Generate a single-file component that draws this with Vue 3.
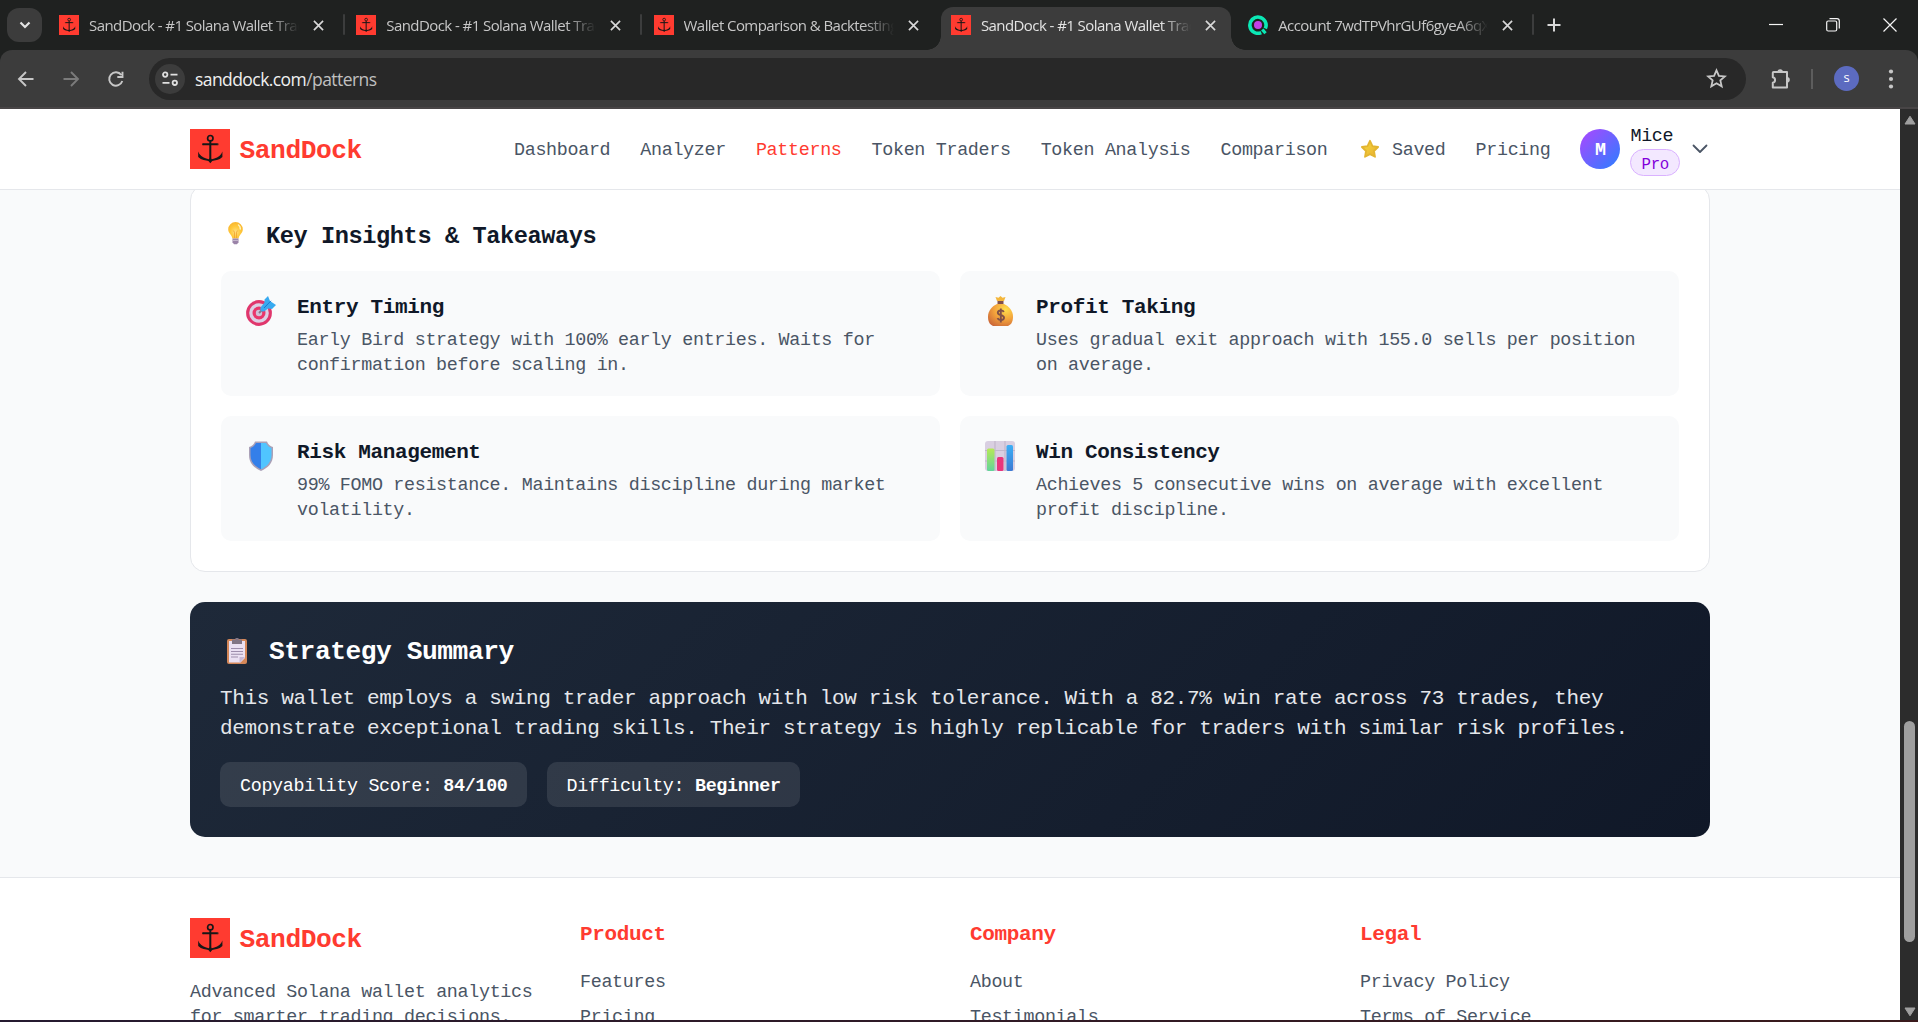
<script setup>
import { h } from 'vue'

const tabs = [
  { title: 'SandDock - #1 Solana Wallet Tracker', icon: 'anchor', sep: true },
  { title: 'SandDock - #1 Solana Wallet Tracker', icon: 'anchor', sep: true },
  { title: 'Wallet Comparison & Backtesting', icon: 'anchor' },
  { title: 'SandDock - #1 Solana Wallet Tracker', icon: 'anchor', active: true },
  { title: 'Account 7wdTPVhrGUf6gyeA6qX', icon: 'ring', sep: true },
]

const insights = [
  { icon: 'target', title: 'Entry Timing', text: 'Early Bird strategy with 100% early entries. Waits for confirmation before scaling in.' },
  { icon: 'bag', title: 'Profit Taking', text: 'Uses gradual exit approach with 155.0 sells per position on average.' },
  { icon: 'shield', title: 'Risk Management', text: '99% FOMO resistance. Maintains discipline during market volatility.' },
  { icon: 'chart', title: 'Win Consistency', text: 'Achieves 5 consecutive wins on average with excellent profit discipline.' },
]

const columns = [
  { title: 'Product', links: ['Features', 'Pricing'] },
  { title: 'Company', links: ['About', 'Testimonials'] },
  { title: 'Legal', links: ['Privacy Policy', 'Terms of Service'] },
]

const Anchor = () =>
  h('svg', { viewBox: '0 0 40 40' }, [
    h('rect', { width: 40, height: 40, fill: '#ff3b30' }),
    h('g', { fill: 'none', stroke: '#171717' }, [
      h('circle', { cx: 20.3, cy: 9.2, r: 2.7, 'stroke-width': 1.7 }),
      h('path', { d: 'M20.3 12V30M13 15.3H27.6', 'stroke-width': 2 }),
      h('path', { d: 'M12.7 14.4v1.8M27.9 14.4v1.8', 'stroke-width': 1 }),
    ]),
    h('path', {
      fill: '#171717',
      d: 'M8.2 22.6L9.4 24.9C11.6 28 15.5 29.3 18.8 30.2L20.3 28.8L21.8 30.2C25.2 29.3 29.2 28 31.2 24.9L32.4 22.6V28C29.2 31.2 24.5 31.3 22.2 32.1L20.3 34.2L18.4 32.1C16.1 31.3 11.4 31.2 8.2 28Z',
    }),
  ])
</script>

<template>
  <div class="window">
    <div class="tabstrip">
      <div class="tab-search">
        <svg width="14" height="14" viewBox="0 0 14 14"><path d="M2.5 4.5L7 9l4.500-4.500" /></svg>
      </div>
      <div v-for="(t, i) in tabs" :key="i" class="tab-cell">
        <div class="tab" :class="{ active: t.active }">
          <Anchor v-if="t.icon === 'anchor'" class="fav" />
          <svg v-else class="fav" viewBox="0 0 20 20">
            <path d="M13.200 17.600A8.100 8.100 0 1 1 17.300 13.600" fill="none" stroke="#0be8b5" stroke-width="3.600" />
            <path d="M14.300 14.500l3.200 3.700" stroke="#0be8b5" stroke-width="3.200" />
            <circle cx="10" cy="10" r="4" fill="#c33fe8" />
          </svg>
          <span class="tab-title">{{ t.title }}</span>
          <svg class="tab-x" viewBox="0 0 12 12"><path d="M1 1l10 10M11 1L1 11" /></svg>
        </div>
        <i v-if="t.sep" class="tab-sep"></i>
      </div>
      <svg class="plus" viewBox="0 0 14 14"><path d="M7 0.500v13M0.500 7h13" /></svg>
      <div class="win-controls">
        <svg viewBox="0 0 14 14"><path d="M0 6.500h14" /></svg>
        <svg viewBox="0 0 14 14"><rect x="0.700" y="3" width="10" height="10" rx="1.500" /><path d="M3.500 0.700h7.500a2.300 2.300 0 0 1 2.300 2.300v7.500" /></svg>
        <svg viewBox="0 0 14 14"><path d="M0.500 0.500l13 13M13.500 0.500l-13 13" /></svg>
      </div>
    </div>

    <div class="toolbar">
      <div class="nav-buttons">
        <svg viewBox="0 0 20 20"><path d="M17.500 10H3M10 3L3 10l7 7" /></svg>
        <svg class="dim" viewBox="0 0 20 20"><path d="M2.500 10H17M10 3l7 7-7 7" /></svg>
        <svg viewBox="0 0 20 20"><path d="M16.300 12A6.700 6.700 0 1 1 15.300 6M16.500 2.800V8H11.300" /></svg>
      </div>
      <div class="address">
        <span class="tune">
          <svg viewBox="0 0 18 18"><circle cx="4.200" cy="4.600" r="2.200" /><path d="M9.500 4.600H16.500M1.500 12.800H8.500" /><circle cx="13.800" cy="12.800" r="2.200" /></svg>
        </span>
        <span class="url"><b>sanddock.com</b>/patterns</span>
        <svg class="star" viewBox="0 0 20 20"><path d="M10 2.200l2.300 5.300 5.700.5-4.350 3.800 1.300 5.700L10 14.500l-4.950 3 1.300-5.700L2 8l5.700-.5z" /></svg>
      </div>
      <svg class="puzzle" viewBox="0 0 22 22"><path d="M3.500 4H17v15.500H2.800v-4.700c3-.6 3-4.900 0-5.500V4.700a.7.700 0 0 1 .7-.7z" /><path class="knob" d="M7.500 4a2.700 2.700 0 0 1 5.400 0zM17 9a2.800 2.800 0 0 1 0 5.600z" /></svg>
      <i class="bar-sep"></i>
      <span class="profile">s</span>
      <svg class="dots" viewBox="0 0 6 20"><circle cx="3" cy="2.500" r="2.100" /><circle cx="3" cy="10" r="2.100" /><circle cx="3" cy="17.500" r="2.100" /></svg>
    </div>

    <div class="viewport">
      <div class="page">
        <header class="header">
          <div class="container header-row">
            <div class="brand"><Anchor class="logo" /><span>SandDock</span></div>
            <nav>
              <a>Dashboard</a><a>Analyzer</a><a class="on">Patterns</a><a>Token Traders</a><a>Token Analysis</a><a>Comparison</a>
              <a class="saved">
                <svg viewBox="0 0 20 20">
                  <defs><linearGradient id="gold" x1="0" y1="0" x2="1" y2="1"><stop offset="0" stop-color="#f5dc3e" /><stop offset="1" stop-color="#e9ad30" /></linearGradient></defs>
                  <path d="M10 1.800l2.500 5.300 5.600.9-4.100 4 1 5.800L10 15.100l-5 2.700 1-5.800-4.100-4 5.600-.9z" fill="url(#gold)" stroke="#e3b531" stroke-width="1.800" stroke-linejoin="round" />
                </svg>
                <span>Saved</span>
              </a>
              <a>Pricing</a>
            </nav>
            <div class="user">
              <span class="avatar">M</span>
              <div class="who"><span class="name">Mice</span><span class="pro">Pro</span></div>
              <svg viewBox="0 0 20 20"><path d="M3.500 6.500L10 13l6.500-6.500" /></svg>
            </div>
          </div>
        </header>

        <main>
          <section class="card">
            <h2>
              <svg viewBox="0 0 32 24">
                <defs><radialGradient id="bulb" cx=".5" cy=".6" r=".6"><stop offset="0" stop-color="#ffdf82" /><stop offset=".55" stop-color="#ffc93c" /><stop offset="1" stop-color="#f9b62f" /></radialGradient></defs>
                <path d="M14.500 1a7.300 7.300 0 0 0-7.300 7.300c0 4.200 3.800 5.500 4.200 9.200h6.200c.4-3.700 4.200-5 4.200-9.200A7.300 7.300 0 0 0 14.500 1z" fill="url(#bulb)" />
                <path d="M12.300 9.500l1.200 1.700V17M16.700 9.500l-1.200 1.700V17" fill="none" stroke="#f0a12e" stroke-width=".8" />
                <path d="M17.500 4q2 1.400 1.800 4" fill="none" stroke="#fff3c2" stroke-width="1.500" stroke-linecap="round" />
                <path d="M11.500 17.500h6v3.800l-1.500 2h-3l-1.500-2z" fill="#9a83a8" /><path d="M11.500 19.400h6" stroke="#cabbd0" stroke-width="1" />
              </svg>
              <span>Key Insights &amp; Takeaways</span>
            </h2>
            <div class="grid">
              <article v-for="c in insights" :key="c.title">
                <svg v-if="c.icon === 'target'" viewBox="0 0 30 30">
                  <circle cx="13" cy="17" r="12.900" fill="#e0366c" /><circle cx="13" cy="17" r="9.800" fill="#dcd0e5" /><circle cx="13" cy="17" r="6.500" fill="#e9376c" /><circle cx="13" cy="17" r="3.200" fill="#cfc1d8" />
                  <path d="M13 17l5-5" stroke="#857a8d" stroke-width="2" />
                  <path d="M14.500 11.500L18.500 6.500V3.500L22 0l2 5 6 4-4 4-4-.6-3.500 2.800q-5 1-4-3.700z" fill="#38aaf0" /><path d="M18 12L25 4.800" stroke="#1978d1" stroke-width="1" />
                </svg>
                <svg v-else-if="c.icon === 'bag'" viewBox="0 0 30 30">
                  <defs><radialGradient id="bag" cx=".7" cy=".25" r=".9"><stop offset="0" stop-color="#ffdf4b" /><stop offset=".5" stop-color="#f3a33c" /><stop offset="1" stop-color="#c96437" /></radialGradient></defs>
                  <path d="M12 5L10.500 1l3 .8L15.500 0l2 1.800 3-.8L19 5z" fill="#f4b63b" /><path d="M12.500 5h6v3h-6z" fill="#80504a" />
                  <path d="M12 8h7c5 2 9 7 9 12.500 0 5-1.500 8-5 9.500H8c-3.500-1.500-5-4.500-5-9.500C3 15 7 10 12 8z" fill="url(#bag)" />
                  <path d="M18.800 16c-1-2.200-6-2.200-6 .7 0 3.300 6.200 1.700 6.200 5 0 3-5.500 3-6.500.5M15.800 12.500v14" fill="none" stroke="#805047" stroke-width="1.900" />
                </svg>
                <svg v-else-if="c.icon === 'shield'" viewBox="0 0 30 30">
                  <path d="M9 .5h12q1.500 4.300 6 5.500v8c0 8-5 13-12 16C8 27 3 22 3 14V6q4.500-1.200 6-5.500z" fill="#aaa0b7" />
                  <path d="M15 2H10Q8 6 4.500 7v7C4.500 21 9 25.500 15 28.300z" fill="#347fe9" /><path d="M15 2h5Q22 6 25.500 7v7c0 7-4.500 11.500-10.500 14.300z" fill="#50c5ff" />
                </svg>
                <svg v-else viewBox="0 0 30 30">
                  <rect width="30" height="30" rx="3" fill="#d9cfe1" /><path d="M10 0v30M20 0v30M0 9.500h30M0 20h30" stroke="#c2b7cb" stroke-width="1.200" />
                  <defs><linearGradient id="green" x1="0" y1="0" x2="0" y2="1"><stop offset="0" stop-color="#b6e957" /><stop offset="1" stop-color="#62d49a" /></linearGradient><linearGradient id="blue" x1="0" y1="0" x2="0" y2="1"><stop offset="0" stop-color="#3caff5" /><stop offset="1" stop-color="#3c79d3" /></linearGradient></defs>
                  <rect x="2" y="7.500" width="7.500" height="22.500" rx="1.500" fill="url(#green)" /><rect x="12" y="16" width="6.500" height="14" rx="1.500" fill="#e9347b" /><rect x="21.500" y="4" width="6.500" height="26" rx="1.500" fill="url(#blue)" />
                </svg>
                <div>
                  <h3>{{ c.title }}</h3>
                  <p>{{ c.text }}</p>
                </div>
              </article>
            </div>
          </section>

          <section class="summary">
            <h2>
              <svg viewBox="0 0 34 26">
                <rect x="7" y="1" width="20" height="25" rx="2" fill="#d48758" /><path d="M9 3h16v17l-4.500 4.500H9z" fill="#eae0f2" /><path d="M25 19l-5.500 6v-6z" fill="#c7b8d6" />
                <path d="M12 4V1.500h3.500V0h3v1.500H22V6H12z" fill="#817585" /><path d="M11 10.500h12M11 13.500h12M11 16.200h12M11 19h7" stroke="#9d8dac" stroke-width="1.100" />
              </svg>
              <span>Strategy Summary</span>
            </h2>
            <p>This wallet employs a swing trader approach with low risk tolerance. With a 82.7% win rate across 73 trades, they demonstrate exceptional trading skills. Their strategy is highly replicable for traders with similar risk profiles.</p>
            <div class="chips">
              <span>Copyability Score: <b>84/100</b></span>
              <span>Difficulty: <b>Beginner</b></span>
            </div>
          </section>
        </main>

        <footer>
          <div class="container footer-grid">
            <div>
              <div class="brand"><Anchor class="logo" /><span>SandDock</span></div>
              <p>Advanced Solana wallet analytics for smarter trading decisions.</p>
            </div>
            <div v-for="c in columns" :key="c.title">
              <h4>{{ c.title }}</h4>
              <ul><li v-for="l in c.links" :key="l">{{ l }}</li></ul>
            </div>
          </div>
        </footer>
      </div>
      <div class="scrollbar">
        <svg viewBox="0 0 12 10"><path d="M6 1.200L11 9H1z" /></svg>
        <i></i>
        <svg class="down" viewBox="0 0 12 10"><path d="M6 8.800L1 1h10z" /></svg>
      </div>
    </div>
    <div class="edge"></div>
  </div>
</template>

<style>
html, body { margin: 0; overflow: hidden; }
</style>

<style scoped>
* { box-sizing: border-box; }
h2, h3, h4, p, ul { margin: 0; padding: 0; list-style: none; }
svg { display: block; flex: none; }
.window { width: 1918px; height: 1022px; display: flex; flex-direction: column; overflow: hidden; background: #1f2120; font-family: "Open Sans", "Noto Sans", sans-serif; }

.tabstrip { height: 50px; flex: none; display: flex; align-items: center; padding-left: 7px; }
.tab-search { width: 35px; height: 34px; margin-right: 7px; border-radius: 12px; background: #3c3c3c; display: flex; align-items: center; justify-content: center; }
.tab-search path { fill: none; stroke: #e3e3e3; stroke-width: 2.2; }
.tab-cell { width: 297.3px; height: 50px; display: flex; align-items: flex-end; flex: none; }
.tab { width: 290px; height: 43px; display: flex; align-items: center; padding: 0 0 7px 10px; color: #c7c7c7; }
.tab.active { position: relative; background: #3c3c3c; border-radius: 12px 12px 0 0; color: #e3e3e3; }
.tab.active::before, .tab.active::after { content: ""; position: absolute; bottom: 0; width: 14px; height: 14px; }
.tab.active::before { left: -14px; background: radial-gradient(circle at 0 0, transparent 13.500px, #3c3c3c 14px); }
.tab.active::after { right: -14px; background: radial-gradient(circle at 100% 0, transparent 13.500px, #3c3c3c 14px); }
.fav { width: 20px; height: 20px; margin-right: 10px; }
.tab-title { width: 210px; margin-right: 14px; overflow: hidden; white-space: nowrap; font-size: 15px; line-height: 22px; letter-spacing: -0.570px; -webkit-mask-image: linear-gradient(90deg, #000 180px, transparent 210px); mask-image: linear-gradient(90deg, #000 180px, transparent 210px); }
.tab-x { width: 11px; height: 11px; }
.tab-x path { stroke: #d8d8d8; stroke-width: 1.8; }
.tab-sep { width: 2px; height: 21px; margin: 0 0 15px 4px; background: #3c3d3d; border-radius: 1px; }
.plus { width: 14px; height: 14px; margin-left: 12px; }
.plus path { stroke: #d8d8d8; stroke-width: 2; }
.win-controls { display: flex; gap: 43px; margin: 0 21px 0 auto; }
.win-controls svg { width: 14px; height: 14px; fill: none; stroke: #f5f5f5; stroke-width: 1.2; }

.toolbar { height: 59px; flex: none; display: flex; align-items: center; background: #3c3c3c; border-radius: 12px 12px 0 0; border-bottom: 2px solid #484546; }
.nav-buttons { width: 149px; display: flex; gap: 25px; padding-left: 16px; }
.nav-buttons svg { width: 20px; height: 20px; fill: none; stroke: #c7c7c7; stroke-width: 1.9; }
.nav-buttons .dim { stroke: #7b7b7b; }
.address { width: 1597px; height: 42px; display: flex; align-items: center; border-radius: 21px; background: #282828; padding: 0 19px 0 6px; }
.tune { width: 30px; height: 30px; border-radius: 15px; background: #3c3c3c; display: flex; align-items: center; justify-content: center; }
.tune svg { width: 18px; height: 18px; fill: none; stroke: #e0e0e0; stroke-width: 1.8; }
.url { margin-left: 10px; font-size: 17.5px; letter-spacing: -0.570px; color: #c0c0c0; }
.url b { font-weight: 400; color: #f0f0f0; }
.star { width: 21px; height: 21px; margin-left: auto; fill: none; stroke: #c7c7c7; stroke-width: 1.7; }
.puzzle { width: 22px; height: 22px; margin-left: 24px; fill: none; stroke: #c7c7c7; stroke-width: 2; stroke-linejoin: round; }
.puzzle .knob { fill: #c7c7c7; stroke: none; }
.bar-sep { width: 2px; height: 20px; margin-left: 19px; background: #5d5d5d; }
.profile { width: 25px; height: 25px; margin-left: 21px; border-radius: 50%; background: #5c6bc0; color: #fff; font-size: 13px; line-height: 23px; text-align: center; }
.dots { width: 6px; height: 20px; margin-left: 29px; fill: #c7c7c7; }

.viewport { height: 911px; flex: none; display: flex; overflow: hidden; }
.page { width: 1900px; background: #f9fafb; font-family: "Liberation Mono", monospace; font-size: 18.375px; line-height: 25px; color: #4a5565; overflow: hidden; }
.page, .page * { letter-spacing: -0.0172em; }
.container { width: 1520px; margin: 0 auto; }
.header { position: relative; z-index: 1; height: 81px; background: #fff; border-bottom: 1px solid #e5e7eb; }
.header-row { height: 80px; display: flex; align-items: center; }
.brand { display: flex; align-items: center; gap: 9.5px; height: 40px; color: #ff3b30; font-size: 26.250px; font-weight: 700; line-height: 35px; }
.brand span { padding-top: 5px; }
.logo { width: 40px; height: 40px; }
nav { display: flex; gap: 30px; margin-left: auto; }
nav a { padding-top: 3px; white-space: nowrap; }
nav .on { color: #ff3b30; }
.saved { display: flex; align-items: center; }
.saved svg { width: 20px; height: 20px; margin: -3px 12.500px 0 2px; }
.user { display: flex; align-items: center; gap: 10px; margin-left: 30px; }
.avatar { width: 40px; height: 40px; border-radius: 50%; background: linear-gradient(135deg, #ad46ff, #2b7fff); color: #fff; font-weight: 700; line-height: 43px; text-align: center; }
.who { display: flex; flex-direction: column; align-items: flex-start; color: #101828; }
.name { line-height: 25px; padding-top: 1px; height: 26px; }
.pro { height: 27px; border: 1px solid #dab2ff; border-radius: 14px; padding: 2px 10px 0; background: #f3e8ff; color: #8200db; font-size: 15.750px; line-height: 26px; }
.user > svg { width: 20px; height: 20px; fill: none; stroke: #4a5565; stroke-width: 1.8; stroke-linecap: round; stroke-linejoin: round; }

main { width: 1520px; margin: -5px auto 40px; }
.card { background: #fff; border: 1px solid #e5e7eb; border-radius: 15px; padding: 30px; }
h2 { display: flex; height: 35px; line-height: 35px; font-weight: 700; }
h2 span { padding-top: 3px; }
.card h2 { font-size: 23.625px; color: #101828; margin-bottom: 20px; }
.card h2 svg { width: 32px; height: 24px; margin: 5px 13px 0 0; }
.grid { display: grid; grid-template-columns: 1fr 1fr; gap: 20px; }
article { height: 125px; display: flex; background: #f9fafb; border-radius: 10px; padding: 20px; }
article > svg { width: 30px; height: 30px; margin: 5px 21px 0 5px; }
h3 { height: 32px; padding-top: 1.500px; font-size: 21px; line-height: 30px; color: #101828; }
article p { padding-top: 4.500px; }
.summary { height: 235px; margin-top: 30px; padding: 30px; border-radius: 15px; background: linear-gradient(135deg, #1e2939, #101828); color: #fff; }
.summary h2 { font-size: 26.250px; }
.summary h2 svg { width: 34px; height: 26px; margin: 6px 15px 0 0; }
.summary p { height: 60px; margin: 16.500px 0 18.500px; font-size: 21px; line-height: 30px; color: #e5e7eb; }
.chips { display: flex; gap: 20px; }
.chips span { height: 45px; padding: 11.500px 19px 0 20px; border-radius: 10px; background: rgba(255, 255, 255, 0.1); white-space: pre; }
footer { height: 200px; background: #fff; border-top: 1px solid #e5e7eb; padding-top: 40px; }
.footer-grid { display: grid; grid-template-columns: repeat(4, 1fr); column-gap: 40px; }
footer p { margin-top: 21.500px; }
h4 { padding-top: 2px; font-size: 21px; line-height: 30px; color: #ff3b30; }
ul { padding-top: 19.500px; }
li { margin-bottom: 10px; }

.scrollbar { width: 18px; height: 911px; display: flex; flex-direction: column; align-items: center; background: #2c2c2c; padding: 6px 0 3px 1px; }
.scrollbar svg { width: 12px; height: 10px; fill: #9f9f9f; stroke: #9f9f9f; stroke-width: 1; stroke-linejoin: round; }
.scrollbar i { width: 11px; height: 221px; margin-top: 596px; border-radius: 6px; background: #9f9f9f; }
.scrollbar .down { margin-top: auto; }
.edge { height: 2px; flex: none; background: linear-gradient(90deg, #251a30, #3a1a1c); }
</style>
